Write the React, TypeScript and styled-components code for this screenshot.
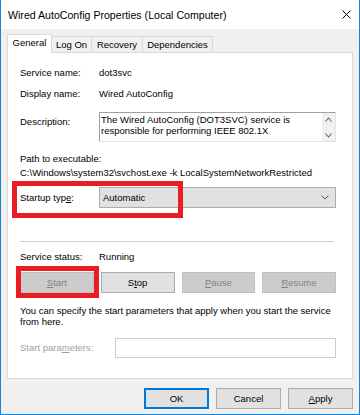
import React from "react";
import styled, { createGlobalStyle } from "styled-components";

const Global = createGlobalStyle`
  html, body { margin: 0; padding: 0; background: #ffffff; }
  body {
    font-family: "Liberation Sans", Arial, sans-serif;
    font-size: 9.5px;
    color: #000000;
    -webkit-font-smoothing: antialiased;
  }
  * { box-sizing: border-box; }
`;

const Window = styled.div`
  width: 360px;
  height: 415px;
  background: #f0f0f0;
  border: 1px solid #1883d7;
  border-top: none;
  display: flex;
  flex-direction: column;
`;

const TitleBar = styled.div`
  height: 29px;
  flex: none;
  background: #ffffff;
  display: flex;
  align-items: center;
  justify-content: space-between;
  padding: 0 8px 0 7px;
`;

const Title = styled.div`
  font-size: 10.6px;
  line-height: 14px;
  padding-top: 1px;
`;

const CloseIcon = styled.svg`
  width: 9px;
  height: 9px;
  display: block;
  margin-top: -1px;
`;

const Body = styled.div`
  flex: 1;
  display: flex;
  flex-direction: column;
  padding: 0 6px;
`;

const TabStrip = styled.div`
  display: flex;
  align-items: flex-end;
  height: 18px;
  margin-top: 5px;
`;

const Tab = styled.div<{ $w: number; $active?: boolean }>`
  width: ${(p) => p.$w}px;
  height: ${(p) => (p.$active ? 19 : 16)}px;
  margin-bottom: ${(p) => (p.$active ? -1 : 0)}px;
  z-index: ${(p) => (p.$active ? 2 : 0)};
  background: ${(p) => (p.$active ? "#ffffff" : "#f0f0f0")};
  border: 1px solid #d9d9d9;
  border-bottom: none;
  border-left-width: ${(p) => (p.$active ? 1 : 0)}px;
  display: flex;
  align-items: center;
  justify-content: center;
  font-size: 9.5px;
  line-height: 12px;
  padding-bottom: ${(p) => (p.$active ? 2 : 0)}px;
`;

const Panel = styled.div`
  height: 327px;
  background: #ffffff;
  border: 1px solid #d9d9d9;
  padding: 13px 16px 0 12px;
  display: flex;
  flex-direction: column;
  position: relative;
  z-index: 1;
`;

const Row = styled.div<{ $mt?: number; $align?: string }>`
  display: flex;
  align-items: ${(p) => p.$align || "center"};
  margin-top: ${(p) => p.$mt || 0}px;
  line-height: 14px;
  min-height: 14px;
  position: relative;
`;

const Label = styled.div<{ $w?: number; $pt?: number; $disabled?: boolean }>`
  width: ${(p) => (p.$w ? `${p.$w}px` : "auto")};
  flex: none;
  padding-top: ${(p) => p.$pt || 0}px;
  color: ${(p) => (p.$disabled ? "#a0a0a0" : "#000000")};
  white-space: nowrap;
`;

const Value = styled.div`
  white-space: nowrap;
`;

const Mn = styled.span`
  text-decoration: underline;
  text-underline-offset: 1px;
`;

const DescBox = styled.div`
  flex: 1;
  height: 30px;
  border-top: 1px solid #a0a0a0;
  border-left: 1px solid #a0a0a0;
  border-right: 1px solid #e3e3e3;
  border-bottom: 1px solid #e3e3e3;
  display: flex;
  background: #ffffff;
`;

const DescText = styled.div`
  flex: 1;
  padding: 1px 0 0 1px;
  line-height: 11px;
`;

const ScrollBar = styled.div`
  width: 13px;
  background: #f0f0f0;
  display: flex;
  flex-direction: column;
  align-items: center;
  justify-content: space-between;
  padding: 4px 0 3px;
`;

const Arrow = styled.svg`
  width: 7px;
  height: 5px;
  display: block;
`;

const Select = styled.div`
  flex: 1;
  height: 21px;
  background: #e1e1e1;
  border: 1px solid #adadad;
  display: flex;
  align-items: center;
  justify-content: space-between;
  padding: 0 6px 0 3px;
`;

const Chevron = styled.svg`
  width: 8px;
  height: 5px;
  display: block;
`;

const Highlight = styled.div<{ $l: number; $t: number; $w: number; $h: number }>`
  position: absolute;
  left: ${(p) => p.$l}px;
  top: ${(p) => p.$t}px;
  width: ${(p) => p.$w}px;
  height: ${(p) => p.$h}px;
  border: 5px solid #ec1c24;
  pointer-events: none;
  z-index: 3;
`;

const Separator = styled.div`
  height: 1px;
  background: #d0d0d0;
  margin: 33px 2px 0 0;
`;

const ButtonGrid = styled.div`
  display: grid;
  grid-template-columns: repeat(4, 1fr);
  gap: 7px;
  margin-top: 8px;
  position: relative;
`;

const Button = styled.div<{ $disabled?: boolean; $default?: boolean }>`
  height: 21px;
  display: flex;
  align-items: center;
  justify-content: center;
  background: ${(p) => (p.$disabled ? "#cccccc" : "#e1e1e1")};
  border: 1px solid ${(p) => (p.$disabled ? "#bfbfbf" : p.$default ? "#0078d7" : "#adadad")};
  box-shadow: ${(p) => (p.$default ? "inset 0 0 0 1px #0078d7" : "none")};
  color: ${(p) => (p.$disabled ? "#838383" : "#000000")};
  font-size: 9.5px;
`;

const HelpText = styled.div`
  margin-top: 12px;
  line-height: 11px;
  white-space: nowrap;
`;

const Input = styled.div`
  flex: 1;
  height: 20px;
  background: #ffffff;
  border: 1px solid #cccccc;
`;

const Footer = styled.div`
  display: flex;
  justify-content: flex-end;
  gap: 7px;
  margin-top: 9px;
`;

const FooterButton = styled(Button)`
  width: 65px;
`;

export default function App() {
  return (
    <>
      <Global />
      <Window>
        <TitleBar>
          <Title>Wired AutoConfig Properties (Local Computer)</Title>
          <CloseIcon viewBox="0 0 9 9">
            <path d="M0.5 0.5 L8.5 8.5 M8.5 0.5 L0.5 8.5" stroke="#000" strokeWidth="1" fill="none" />
          </CloseIcon>
        </TitleBar>
        <Body>
          <TabStrip>
            <Tab $w={45} $active>General</Tab>
            <Tab $w={40}>Log On</Tab>
            <Tab $w={51}>Recovery</Tab>
            <Tab $w={70}>Dependencies</Tab>
          </TabStrip>
          <Panel>
            <Row>
              <Label $w={79}>Service name:</Label>
              <Value>dot3svc</Value>
            </Row>
            <Row $mt={7}>
              <Label $w={79}>Display name:</Label>
              <Value>Wired AutoConfig</Value>
            </Row>
            <Row $mt={11} $align="flex-start">
              <Label $w={79} $pt={3}>Description:</Label>
              <DescBox>
                <DescText>
                  The Wired AutoConfig (DOT3SVC) service is
                  <br />
                  responsible for performing IEEE 802.1X
                </DescText>
                <ScrollBar>
                  <Arrow viewBox="0 0 7 5">
                    <path d="M0.5 4.5 L3.5 1 L6.5 4.5" stroke="#606060" strokeWidth="1.1" fill="none" />
                  </Arrow>
                  <Arrow viewBox="0 0 7 5">
                    <path d="M0.5 0.5 L3.5 4 L6.5 0.5" stroke="#606060" strokeWidth="1.1" fill="none" />
                  </Arrow>
                </ScrollBar>
              </DescBox>
            </Row>
            <Row $mt={10}>
              <Label>Path to executable:</Label>
            </Row>
            <Row>
              <Value>C:\Windows\system32\svchost.exe -k LocalSystemNetworkRestricted</Value>
            </Row>
            <Row $mt={7}>
              <Label $w={79}>
                Startup typ<Mn>e</Mn>:
              </Label>
              <Select>
                <span>Automatic</span>
                <Chevron viewBox="0 0 8 5">
                  <path d="M0.5 0.5 L4 4 L7.5 0.5" stroke="#505050" strokeWidth="1" fill="none" />
                </Chevron>
              </Select>
              <Highlight $l={-8} $t={-6} $w={171} $h={37} />
            </Row>
            <Separator />
            <Row $mt={8}>
              <Label $w={79}>Service status:</Label>
              <Value>Running</Value>
            </Row>
            <ButtonGrid>
              <Button $disabled>
                <Mn>S</Mn>tart
              </Button>
              <Button>
                S<Mn>t</Mn>op
              </Button>
              <Button $disabled>
                <Mn>P</Mn>ause
              </Button>
              <Button $disabled>
                <Mn>R</Mn>esume
              </Button>
              <Highlight $l={-4} $t={-6} $w={83} $h={32} />
            </ButtonGrid>
            <HelpText>
              You can specify the start parameters that apply when you start the service
              <br />
              from here.
            </HelpText>
            <Row $mt={11}>
              <Label $w={95} $disabled>
                Start para<Mn>m</Mn>eters:
              </Label>
              <Input />
            </Row>
          </Panel>
          <Footer>
            <FooterButton $default>OK</FooterButton>
            <FooterButton>Cancel</FooterButton>
            <FooterButton>
              <Mn>A</Mn>pply
            </FooterButton>
          </Footer>
        </Body>
      </Window>
    </>
  );
}
